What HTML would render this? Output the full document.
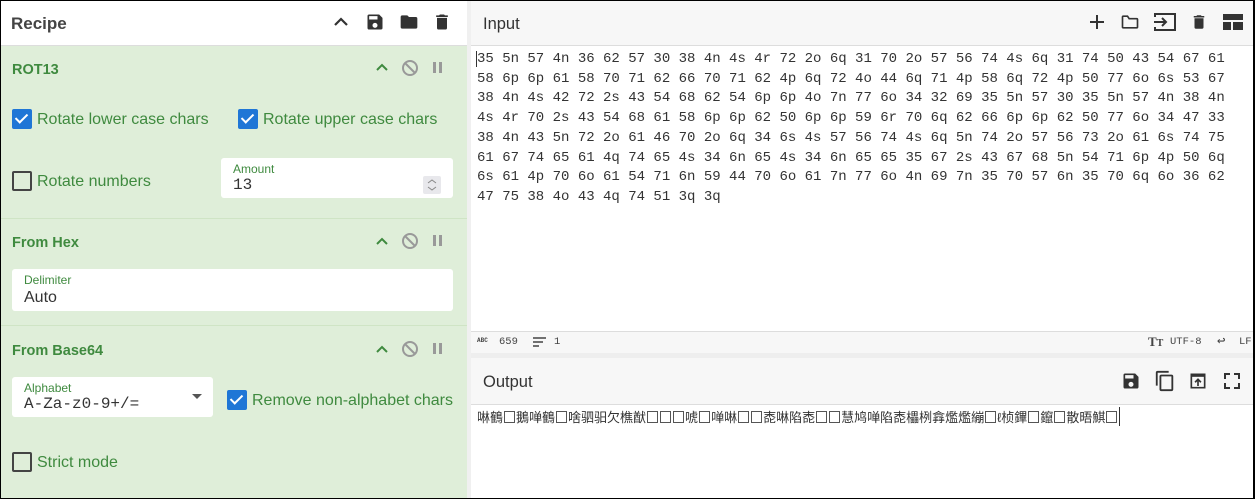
<!DOCTYPE html><html><head><style>
*{box-sizing:border-box;margin:0;padding:0}
body{width:1255px;height:499px;overflow:hidden;font-family:"Liberation Sans",sans-serif;background:#fff;position:relative}
.frame{position:absolute;inset:0;border:1px solid #000;border-right-width:2px;pointer-events:none;z-index:9}
.left{position:absolute;left:0;top:0;width:468px;height:499px;background:#dfeed9}
.hdr{position:absolute;left:0;top:0;height:46px;background:#fff;border-bottom:1px solid #ddd;width:100%}
.hdr h1{position:absolute;left:11px;top:14px;font-size:17px;font-weight:bold;color:#444}
.op{position:absolute;left:0;width:100%;border-top:1px solid #cfe4c5}
.op .t{position:absolute;left:12px;font-size:14.5px;font-weight:bold;color:#3f8a3f}
.g{color:#3f8a3f;font-size:16px;position:absolute}
.cb{position:absolute;width:20px;height:20px;border-radius:2px}
.cb.on{background:#1f76d6}
.cb.off{border:2px solid #444}
.cb.on:after{content:"";position:absolute;left:6px;top:2px;width:5px;height:10px;border:solid #fff;border-width:0 2px 2px 0;transform:rotate(45deg)}
.box{position:absolute;background:#fff;border-radius:3px}
.box .l{position:absolute;left:12px;top:4px;font-size:12px;color:#3f8a3f}
.box .v{position:absolute;left:12px;top:19px;font-size:16px;color:#333}
.mono{font-family:"Liberation Mono",monospace}
.ic{position:absolute}
.right{position:absolute;left:471px;top:0;width:784px;height:499px}
.rh{position:absolute;left:0;width:100%;background:#f7f7f7;border-bottom:1px solid #ddd}
.rh h2{position:absolute;left:12px;font-size:16.5px;font-weight:normal;color:#333}
pre{position:absolute;left:6px;top:50px;font-family:"Liberation Mono",monospace;font-size:14px;line-height:19.7px;color:#333}
.tofu{display:inline-block;width:11px;height:12px;border:1px solid #555;vertical-align:-1px;margin:0 1px;font-size:4px}
</style></head><body>
<div class="frame"></div>
<div class="left">
 <div class="hdr"><h1>Recipe</h1>
  <svg class="ic" style="left:333px;top:14px" width="16" height="16" viewBox="0 0 16 16"><path d="M2 11l6-6 6 6" stroke="#333" stroke-width="2.2" fill="none"/></svg>
  <svg class="ic" style="left:365px;top:12px" width="20" height="20" viewBox="0 0 24 24"><path fill="#333" d="M17 3H5a2 2 0 0 0-2 2v14a2 2 0 0 0 2 2h14a2 2 0 0 0 2-2V7l-4-4zm-5 16a3 3 0 1 1 0-6 3 3 0 0 1 0 6zm3-10H5V5h10v4z"/></svg>
  <svg class="ic" style="left:398px;top:12px" width="22" height="20" viewBox="0 0 24 24"><path fill="#333" d="M10 4H4a2 2 0 0 0-2 2v12a2 2 0 0 0 2 2h16a2 2 0 0 0 2-2V8a2 2 0 0 0-2-2h-8l-2-2z"/></svg>
  <svg class="ic" style="left:432px;top:12px" width="20" height="20" viewBox="0 0 24 24"><path fill="#333" d="M6 19a2 2 0 0 0 2 2h8a2 2 0 0 0 2-2V7H6v12zM19 4h-3.5l-1-1h-5l-1 1H5v2h14V4z"/></svg>
 </div>
 <div class="op" style="top:46px;height:173px;border-top:none">
  <div class="t" style="top:16px">ROT13</div>
  <svg class="ic" style="left:375px;top:16px" width="14" height="10"><path d="M2 8l5-5 5 5" stroke="#3f8a3f" stroke-width="2" fill="none"/></svg>
  <svg class="ic" style="left:401px;top:13px" width="18" height="18"><circle cx="9" cy="9" r="7" stroke="#999" stroke-width="2" fill="none"/><path d="M4 4l10 10" stroke="#999" stroke-width="2"/></svg>
  <svg class="ic" style="left:432px;top:15px" width="12" height="14"><rect x="1" y="1" width="3" height="11" fill="#999"/><rect x="7" y="1" width="3" height="11" fill="#999"/></svg>
  <div class="cb on" style="left:12px;top:63px"></div><div class="g" style="left:37px;top:65px">Rotate lower case chars</div>
  <div class="cb on" style="left:238px;top:63px"></div><div class="g" style="left:263px;top:65px">Rotate upper case chars</div>
  <div class="cb off" style="left:12px;top:125px"></div><div class="g" style="left:37px;top:127px">Rotate numbers</div>
  <div class="box" style="left:221px;top:112px;width:232px;height:40px"><div class="l">Amount</div><div class="v mono" style="top:18px">13</div>
   <div style="position:absolute;left:202px;top:18px;width:18px;height:18px;background:#e8e8ec;border-radius:2px"><svg width="18" height="18"><path d="M5 7l4-3 4 3M5 11l4 3 4-3" stroke="#888" fill="none"/></svg></div></div>
 </div>
 <div class="op" style="top:218px;height:108px">
  <div class="t" style="top:16px">From Hex</div>
  <svg class="ic" style="left:375px;top:17px" width="14" height="10"><path d="M2 8l5-5 5 5" stroke="#3f8a3f" stroke-width="2" fill="none"/></svg>
  <svg class="ic" style="left:401px;top:13px" width="18" height="18"><circle cx="9" cy="9" r="7" stroke="#999" stroke-width="2" fill="none"/><path d="M4 4l10 10" stroke="#999" stroke-width="2"/></svg>
  <svg class="ic" style="left:432px;top:15px" width="12" height="14"><rect x="1" y="1" width="3" height="11" fill="#999"/><rect x="7" y="1" width="3" height="11" fill="#999"/></svg>
  <div class="box" style="left:12px;top:50px;width:441px;height:42px"><div class="l">Delimiter</div><div class="v" style="top:20px">Auto</div></div>
 </div>
 <div class="op" style="top:325px;height:174px">
  <div class="t" style="top:17px">From Base64</div>
  <svg class="ic" style="left:375px;top:18px" width="14" height="10"><path d="M2 8l5-5 5 5" stroke="#3f8a3f" stroke-width="2" fill="none"/></svg>
  <svg class="ic" style="left:401px;top:14px" width="18" height="18"><circle cx="9" cy="9" r="7" stroke="#999" stroke-width="2" fill="none"/><path d="M4 4l10 10" stroke="#999" stroke-width="2"/></svg>
  <svg class="ic" style="left:432px;top:16px" width="12" height="14"><rect x="1" y="1" width="3" height="11" fill="#999"/><rect x="7" y="1" width="3" height="11" fill="#999"/></svg>
  <div class="box" style="left:12px;top:51px;width:201px;height:40px"><div class="l">Alphabet</div><div class="v mono" style="top:18px">A-Za-z0-9+/=</div>
   <svg style="position:absolute;left:180px;top:17px" width="10" height="6"><path d="M0 0h10L5 5z" fill="#555"/></svg></div>
  <div class="cb on" style="left:227px;top:64px"></div><div class="g" style="left:252px;top:66px">Remove non-alphabet chars</div>
  <div class="cb off" style="left:12px;top:126px"></div><div class="g" style="left:37px;top:128px">Strict mode</div>
 </div>
</div>
<div style="position:absolute;left:467px;top:0;width:4px;height:499px;background:#f0f0f0"></div>
<div class="right">
 <div class="rh" style="top:0;height:46px"><h2 style="top:15px">Input</h2>
  <svg class="ic" style="left:617px;top:13px" width="18" height="18"><path d="M9 2v14M2 9h14" stroke="#333" stroke-width="2"/></svg>
  <svg class="ic" style="left:648px;top:12px" width="22" height="20" viewBox="0 0 24 24"><path fill="none" stroke="#333" stroke-width="2" d="M3 6v12a1 1 0 0 0 1 1h16a1 1 0 0 0 1-1V9a1 1 0 0 0-1-1h-9L9 5H4a1 1 0 0 0-1 1z"/></svg>
  <svg class="ic" style="left:682px;top:11px" width="24" height="22" viewBox="0 0 24 22"><path fill="none" stroke="#333" stroke-width="2" d="M2 6V3h20v16H2v-3"/><path d="M1 11h12M9 7l4 4-4 4" stroke="#333" stroke-width="2" fill="none"/></svg>
  <svg class="ic" style="left:719px;top:12px" width="18" height="20" viewBox="0 0 24 24"><path fill="#333" d="M6 19a2 2 0 0 0 2 2h8a2 2 0 0 0 2-2V7H6v12zM19 4h-3.5l-1-1h-5l-1 1H5v2h14V4z"/></svg>
  <svg class="ic" style="left:752px;top:14px" width="20" height="16"><rect x="0" y="0" width="20" height="6" fill="#333"/><rect x="0" y="8" width="8" height="8" fill="#333"/><rect x="10" y="8" width="10" height="8" fill="#333"/></svg>
 </div>
 <div style="position:absolute;left:5px;top:51px;width:1px;height:16px;background:#333"></div>
 <pre>35 5n 57 4n 36 62 57 30 38 4n 4s 4r 72 2o 6q 31 70 2o 57 56 74 4s 6q 31 74 50 43 54 67 61
58 6p 6p 61 58 70 71 62 66 70 71 62 4p 6q 72 4o 44 6q 71 4p 58 6q 72 4p 50 77 6o 6s 53 67
38 4n 4s 42 72 2s 43 54 68 62 54 6p 6p 4o 7n 77 6o 34 32 69 35 5n 57 30 35 5n 57 4n 38 4n
4s 4r 70 2s 43 54 68 61 58 6p 6p 62 50 6p 6p 59 6r 70 6q 62 66 6p 6p 62 50 77 6o 34 47 33
38 4n 43 5n 72 2o 61 46 70 2o 6q 34 6s 4s 57 56 74 4s 6q 5n 74 2o 57 56 73 2o 61 6s 74 75
61 67 74 65 61 4q 74 65 4s 34 6n 65 4s 34 6n 65 65 35 67 2s 43 67 68 5n 54 71 6p 4p 50 6q
6s 61 4p 70 6o 61 54 71 6n 59 44 70 6o 61 7n 77 6o 4n 69 7n 35 70 57 6n 35 70 6q 6o 36 62
47 75 38 4o 43 4q 74 51 3q 3q</pre>
 <div style="position:absolute;left:0;top:331px;width:100%;height:22px;background:#f7f7f7;border-top:1px solid #ddd;font-family:'Liberation Mono',monospace;font-size:10.5px;color:#444">
  <span style="position:absolute;left:6px;top:5px;font-size:6px;font-weight:bold">ABC</span>
  <span style="position:absolute;left:28px;top:4px">659</span>
  <svg style="position:absolute;left:62px;top:5px" width="13" height="11"><path d="M0 1h13M0 5h10M0 9h6" stroke="#444" stroke-width="1.5"/></svg>
  <span style="position:absolute;left:83px;top:4px">1</span>
  <span style="position:absolute;left:677px;top:2px;font-family:'Liberation Serif',serif;font-weight:bold;font-size:13px">T<span style="font-size:10px">T</span></span>
  <span style="position:absolute;left:699px;top:4px">UTF-8</span>
  <span style="position:absolute;left:746px;top:1px;font-size:14px">↩</span>
  <span style="position:absolute;left:768px;top:4px">LF</span>
 </div>
 <div style="position:absolute;left:0;top:353px;width:100%;height:5px;background:#eee"></div>
 <div class="rh" style="top:358px;height:47px"><h2 style="top:15px">Output</h2>
  <svg class="ic" style="left:650px;top:13px" width="20" height="20" viewBox="0 0 24 24"><path fill="#333" d="M17 3H5a2 2 0 0 0-2 2v14a2 2 0 0 0 2 2h14a2 2 0 0 0 2-2V7l-4-4zm-5 16a3 3 0 1 1 0-6 3 3 0 0 1 0 6zm3-10H5V5h10v4z"/></svg>
  <svg class="ic" style="left:683px;top:11px" width="22" height="24" viewBox="0 0 24 24"><path fill="#333" d="M16 1H4a2 2 0 0 0-2 2v14h2V3h12V1zm3 4H8a2 2 0 0 0-2 2v14a2 2 0 0 0 2 2h11a2 2 0 0 0 2-2V7a2 2 0 0 0-2-2zm0 16H8V7h11v14z"/></svg>
  <svg class="ic" style="left:717px;top:13px" width="20" height="20" viewBox="0 0 24 24"><path fill="none" stroke="#333" stroke-width="2" d="M4 4h16v16H4z"/><path d="M4 4h16v3H4z" fill="#333"/><path d="M12 18v-8M8.5 13.5L12 10l3.5 3.5" stroke="#333" stroke-width="2" fill="none"/></svg>
  <svg class="ic" style="left:753px;top:15px" width="16" height="16"><path d="M1 6V1h5M10 1h5v5M15 10v5h-5M6 15H1v-5" stroke="#333" stroke-width="2" fill="none"/></svg>
 </div>
 <div style="position:absolute;left:6px;top:407px;font-family:'Liberation Sans','Noto Sans CJK SC',sans-serif;font-size:13px;color:#333;white-space:nowrap;border-right:1px solid #333;padding-right:1px">啉鶴<span class="tofu"></span>鵝啴鶴<span class="tofu"></span>啥驷驲欠樵猷<span class="tofu"></span><span class="tofu"></span><span class="tofu"></span>唬<span class="tofu"></span>啴啉<span class="tofu"></span><span class="tofu"></span>唜啉陷唜<span class="tofu"></span><span class="tofu"></span>慧鸠啴陷唜櫑栵搻爁爁繃<span class="tofu"></span>ℓ桢鏎<span class="tofu"></span>鑹<span class="tofu"></span>散晤鯕<span class="tofu"></span></div>
</div>
</body></html>
